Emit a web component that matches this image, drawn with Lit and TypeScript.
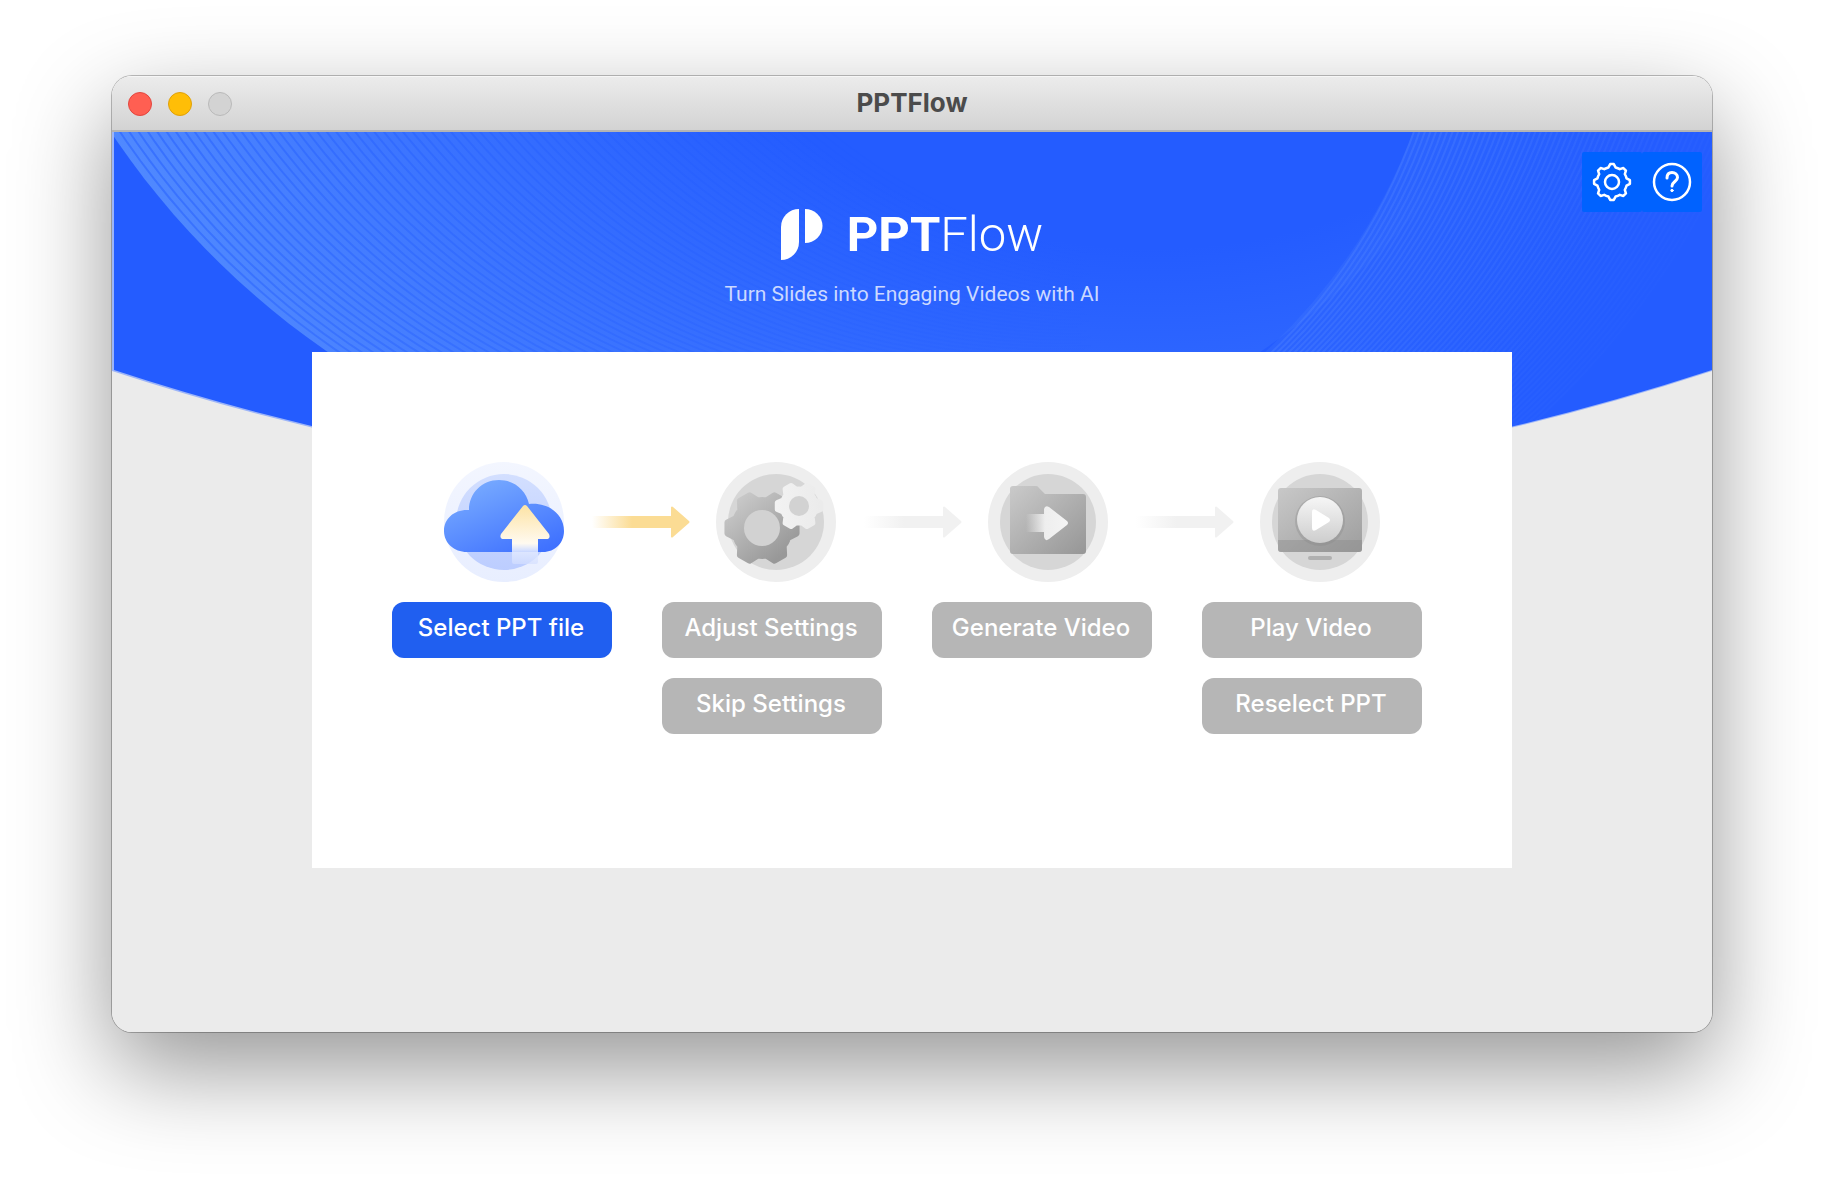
import { LitElement, html, svg, css } from "lit";
import { customElement, property } from "lit/decorators.js";

/** Outline of a toothed wheel centred on (cx, cy). */
function gearPath(cx: number, cy: number, outer: number, inner: number, teeth: number, tip: number, root: number): string {
  const at = (r: number, a: number) => `${(cx + r * Math.cos(a)).toFixed(2)} ${(cy + r * Math.sin(a)).toFixed(2)}`;
  const parts: string[] = [];
  for (let i = 0; i < teeth; i++) {
    const a = Math.PI + (i * 2 * Math.PI) / teeth;
    const next = a + (2 * Math.PI) / teeth;
    parts.push(`${i ? "L" : "M"}${at(inner, a - root)}L${at(outer, a - tip)}L${at(outer, a + tip)}L${at(inner, a + root)}`);
    parts.push(`A${inner} ${inner} 0 0 1 ${at(inner, next - root)}`);
  }
  return parts.join("") + "Z";
}

/** The part of a circle below the banner's top edge and between two x positions, as short chords. */
function bowl(cx: number, cy: number, r: number, minX = -Infinity, maxX = Infinity): string {
  const top = -8;
  const start = Math.PI - Math.asin((top - cy) / r);
  const end = Math.asin((top - cy) / r);
  const count = 72;
  const points: string[] = [];
  for (let i = 0; i <= count; i++) {
    const a = start + ((end - start) * i) / count;
    const x = cx + r * Math.cos(a);
    if (x < minX || x > maxX) continue;
    points.push(`${x.toFixed(1)} ${(cy + r * Math.sin(a)).toFixed(1)}`);
  }
  return "M" + points.join("L");
}

@customElement("banner-art")
class BannerArt extends LitElement {
  static styles = css`
    :host { display: block; }
    .art { display: block; width: 100%; height: 368px; }
  `;

  render() {
    const furrows = Array.from({ length: 74 }, (_, i) => (i + 1) / 58)
      .map((v) => bowl(682 + 321 * v, -457, 822 - 182 * v, -Infinity, 980))
      .join("");
    const rays = Array.from({ length: 60 }, (_, i) => bowl(756 + i * 2, -196 - i * 2, 580 + i * 4, 1050)).join("");
    return html`
      <svg class="art" viewBox="0 0 1600 368" preserveAspectRatio="none" aria-hidden="true">
        <defs>
          <clipPath id="dome"><path d="M2 0H1600V238A2570 2570 0 0 1 2 238Z" /></clipPath>
          <radialGradient id="glow" gradientUnits="userSpaceOnUse" cx="1040" cy="-480" r="1145">
            <stop offset=".52" stop-color="#5089ff" stop-opacity="0" />
            <stop offset="1" stop-color="#5089ff" />
          </radialGradient>
          <linearGradient id="furrow" gradientUnits="userSpaceOnUse" x1="0" y1="0" x2="960" y2="0">
            <stop offset="0" stop-color="#1c56ff" stop-opacity=".45" />
            <stop offset="1" stop-color="#1c56ff" stop-opacity=".05" />
          </linearGradient>
          <linearGradient id="ray" gradientUnits="userSpaceOnUse" x1="1230" y1="60" x2="1520" y2="240">
            <stop offset="0" stop-color="#5b8dff" stop-opacity=".32" />
            <stop offset="1" stop-color="#5b8dff" stop-opacity="0" />
          </linearGradient>
          <linearGradient id="sheen" gradientUnits="userSpaceOnUse" x1="1200" y1="150" x2="1400" y2="260">
            <stop offset="0" stop-color="#4d84ff" stop-opacity=".2" />
            <stop offset="1" stop-color="#4d84ff" stop-opacity="0" />
          </linearGradient>
        </defs>
        <path d="M0 0H1600V239A2570 2570 0 0 1 0 239Z" fill="#9db5f8" />
        <g clip-path="url(#dome)">
          <rect width="1600" height="368" fill="#245cff" />
          <path d=${bowl(682, -457, 822)} fill="url(#glow)" />
          <path d=${furrows} fill="none" stroke="url(#furrow)" stroke-width="2" />
          <path d="M1301 0A580 580 0 0 1 1151 222L1100 280H1600V0Z" fill="url(#sheen)" />
          <path d=${rays} fill="none" stroke="url(#ray)" stroke-width="2" />
        </g>
      </svg>
    `;
  }
}

@customElement("step-icon")
class StepIcon extends LitElement {
  @property() kind = "";

  static styles = css`
    :host { display: block; flex: none; }
    .icon { display: block; width: 120px; height: 120px; }
  `;

  private disc() {
    return svg`<circle cx="60" cy="60" r="60" fill="#eeeeee" /><circle cx="60" cy="60" r="48" fill="#d6d6d6" />`;
  }

  private upload() {
    return svg`
      <defs>
        <linearGradient id="ring" x1="0" y1="0" x2="0" y2="1"><stop stop-color="#f3f6ff" /><stop offset="1" stop-color="#e8eeff" /></linearGradient>
        <linearGradient id="core" x1="0" y1="0" x2="0" y2="1"><stop stop-color="#d3dfff" /><stop offset="1" stop-color="#bccdff" /></linearGradient>
        <linearGradient id="cloud" x1=".1" y1="0" x2=".8" y2="1"><stop stop-color="#7db0ff" /><stop offset="1" stop-color="#3f71ff" /></linearGradient>
        <linearGradient id="up" x1="0" y1="0" x2="0" y2="1"><stop stop-color="#fde3a4" /><stop offset=".65" stop-color="#fffaf0" /><stop offset=".78" stop-color="#ffffff" stop-opacity=".75" /><stop offset=".8" stop-color="#e4ebff" stop-opacity=".8" /><stop offset="1" stop-color="#d4dfff" stop-opacity=".7" /></linearGradient>
      </defs>
      <circle cx="60" cy="60" r="60" fill="url(#ring)" />
      <circle cx="60" cy="60" r="48" fill="url(#core)" />
      <path d="M23 90C10 90 0 81 0 69C0 56 11 47 25 48C25 31 38 18 55 18C70 18 82 28 85 42C104 40 120 52 120 69C120 81 111 90 99 90Z" fill="url(#cloud)" />
      <path d="M79 44Q81 42 83 44L105 72Q107 77 102 77H94V100Q94 102 92 102H70Q68 102 68 100V77H60Q55 77 57 72Z" fill="url(#up)" />
    `;
  }

  private gears() {
    return svg`
      <defs>
        <linearGradient id="big" x1=".1" y1=".1" x2=".8" y2=".9"><stop stop-color="#c8c8c8" /><stop offset="1" stop-color="#989898" /></linearGradient>
        <linearGradient id="small" x1="0" y1="0" x2="1" y2="0"><stop stop-color="#f2f2f2" /><stop offset="1" stop-color="#ebebeb" /></linearGradient>
      </defs>
      ${this.disc()}
      <path d=${gearPath(46, 66, 35, 28, 6, 0.16, 0.36)} fill="url(#big)" stroke="url(#big)" stroke-width="6" stroke-linejoin="round" />
      <circle cx="46" cy="66" r="18" fill="#d2d2d2" />
      <path d=${gearPath(83, 44, 22, 17, 6, 0.16, 0.36)} fill="url(#small)" stroke="url(#small)" stroke-width="5" stroke-linejoin="round" />
      <circle cx="83" cy="44" r="10" fill="#d2d2d2" />
    `;
  }

  private folder() {
    return svg`
      <defs>
        <linearGradient id="body" x1="0" y1="0" x2="1" y2="1"><stop stop-color="#cacaca" /><stop offset="1" stop-color="#969696" /></linearGradient>
        <linearGradient id="go" x1="0" y1="0" x2="1" y2="0"><stop stop-color="#eeeeee" stop-opacity="0" /><stop offset=".45" stop-color="#eeeeee" /><stop offset="1" stop-color="#f4f4f4" /></linearGradient>
      </defs>
      ${this.disc()}
      <path d="M22 27Q22 24 25 24H48Q50 24 51 26L57 32H95Q98 32 98 35V89Q98 92 95 92H25Q22 92 22 89Z" fill="url(#body)" />
      <path d="M38 52H56V47Q57 43 61 45L79 59Q81 61 79 63L61 77Q57 80 56 75V70H38Z" fill="url(#go)" />
    `;
  }

  private screen() {
    return svg`
      <defs>
        <linearGradient id="panel" x1="0" y1="0" x2="1" y2="1"><stop stop-color="#c8c8c8" /><stop offset="1" stop-color="#9e9e9e" /></linearGradient>
        <linearGradient id="knob" x1="0" y1="0" x2="0" y2="1"><stop stop-color="#f6f6f6" /><stop offset="1" stop-color="#cdcdcd" /></linearGradient>
      </defs>
      ${this.disc()}
      <rect x="18" y="26" width="84" height="64" rx="3" fill="url(#panel)" />
      <path d="M18 78H102V87Q102 90 99 90H21Q18 90 18 87Z" fill="#8c8c8c" fill-opacity=".45" />
      <rect x="48" y="94" width="24" height="4" rx="2" fill="#b0b0b0" />
      <circle cx="60" cy="59" r="25" fill="#8a8a8a" fill-opacity=".35" />
      <circle cx="60" cy="58" r="23" fill="url(#knob)" />
      <path d="M52 50Q52 46 56 48L69 56Q71 58 69 60L56 68Q52 70 52 66Z" fill="#ffffff" />
    `;
  }

  render() {
    const art =
      this.kind === "upload" ? this.upload() : this.kind === "gears" ? this.gears() : this.kind === "folder" ? this.folder() : this.screen();
    return html`<svg class="icon" viewBox="0 0 120 120" aria-hidden="true">${art}</svg>`;
  }
}

@customElement("step-arrow")
class StepArrow extends LitElement {
  @property({ type: Boolean }) active = false;

  static styles = css`
    :host { display: flex; flex: 1; justify-content: center; }
    .arrow { width: 100px; height: 32px; }
  `;

  render() {
    const tone = this.active ? "#fbdc94" : "#f1f1f1";
    return html`
      <svg class="arrow" viewBox="0 0 100 32" aria-hidden="true">
        <defs>
          <linearGradient id="fade" gradientUnits="userSpaceOnUse" x1="2" y1="0" x2="42" y2="0">
            <stop stop-color=${tone} stop-opacity="0" />
            <stop offset="1" stop-color=${tone} />
          </linearGradient>
        </defs>
        <path d="M0 10H81V1Q82 0 83 1L99 15Q100 16 99 17L83 31Q82 32 81 31V22H0Z" fill="url(#fade)" />
      </svg>
    `;
  }
}

interface Action {
  label: string;
  primary?: boolean;
}

const COLUMNS: { icon: string; actions: Action[] }[] = [
  { icon: "upload", actions: [{ label: "Select PPT file", primary: true }] },
  { icon: "gears", actions: [{ label: "Adjust Settings" }, { label: "Skip Settings" }] },
  { icon: "folder", actions: [{ label: "Generate Video" }] },
  { icon: "screen", actions: [{ label: "Play Video" }, { label: "Reselect PPT" }] },
];

@customElement("app-root")
class AppRoot extends LitElement {
  static styles = css`
    :host { display: block; font-family: Inter, "Liberation Sans", sans-serif; }
    * { box-sizing: border-box; }
    button { margin: 0; border: 0; padding: 0; font: inherit; }
    .desktop { display: flex; min-height: 100vh; padding: 76px 112px 148px; background: #ffffff; }
    .window {
      flex: 1;
      display: flex;
      flex-direction: column;
      overflow: hidden;
      border-radius: 20px;
      background: #ebebeb;
    }
    .frame {
      flex: 1;
      display: flex;
      border-radius: 20px;
      box-shadow: 0 0 0 1px rgba(0, 0, 0, 0.25), 0 36px 96px rgba(0, 0, 0, 0.42);
    }
    .titlebar {
      display: grid;
      grid-template-columns: 1fr auto 1fr;
      align-items: center;
      height: 56px;
      padding: 0 16px;
      border-bottom: 2px solid #b4b4b4;
      background: linear-gradient(#ececec, #d3d3d3);
      box-shadow: inset 0 1px #f6f6f6;
    }
    .lights { display: flex; gap: 16px; padding-top: 2px; }
    .light { width: 24px; height: 24px; border-radius: 50%; border: 1px solid; }
    .close { background: #ff5f52; border-color: #e2463f; }
    .minimize { background: #ffbe07; border-color: #dfa00a; }
    .zoom { background: #d3d3d3; border-color: #b9b9b9; }
    .title { margin: 0; font-size: 26px; line-height: 32px; font-weight: 700; color: #4b4b4b; }
    .content { position: relative; flex: 1; padding-bottom: 164px; }
    .backdrop { position: absolute; top: 0; left: 0; right: 0; }
    .hero { position: relative; display: grid; grid-template-columns: 1fr auto 1fr; height: 220px; padding: 20px 10px 0; }
    .brand { grid-column: 2; display: flex; flex-direction: column; align-items: center; padding-top: 54px; color: #ffffff; }
    .logo { display: flex; align-items: center; gap: 24px; height: 58px; }
    .mark { width: 42px; height: 52px; }
    .name { margin: 0; font-family: Roboto, sans-serif; font-size: 49px; line-height: 58px; font-weight: 300; }
    .strong { font-weight: 700; }
    .tagline { margin: 16px 0 0; font-family: Roboto, sans-serif; font-size: 21px; line-height: 28px; color: #ccd9ff; }
    .tools { display: flex; justify-content: flex-end; align-items: flex-start; }
    .tool { width: 60px; height: 60px; border-radius: 2px; background: #0062ff; display: grid; place-items: center; }
    .glyph { width: 44px; height: 44px; }
    .card { position: relative; width: 75%; min-height: 516px; margin: 0 auto; padding-top: 110px; background: #ffffff; }
    .steps { display: flex; align-items: center; padding: 0 132px; }
    .actions { display: grid; grid-template-columns: repeat(4, 1fr); gap: 50px; padding: 20px 90px 0 80px; }
    .column { display: flex; flex-direction: column; gap: 20px; }
    .action {
      height: 56px;
      padding: 0 2px 4px 0;
      border-radius: 12px;
      background: #b6b6b6;
      color: #ffffff;
      font-size: 24px;
      line-height: 30px;
      font-weight: 500;
      white-space: nowrap;
    }
    .primary { background: #205ff0; }
  `;

  render() {
    return html`
      <div class="desktop">
        <div class="frame">
          <main class="window">
            <header class="titlebar">
              <div class="lights">
                <button class="light close" aria-label="Close"></button>
                <button class="light minimize" aria-label="Minimize"></button>
                <button class="light zoom" aria-label="Zoom" disabled></button>
              </div>
              <h1 class="title">PPTFlow</h1>
            </header>
            <div class="content">
              <banner-art class="backdrop"></banner-art>
              <section class="hero">
                <div class="brand">
                  <div class="logo">
                    <svg class="mark" viewBox="0 0 42 52" aria-hidden="true">
                      <path d="M18 0V33A18 18 0 0 1 0 51V18A18 18 0 0 1 18 0Z" fill="#ffffff" />
                      <path d="M24 0A17.500 17 0 0 1 24 34Z" fill="#ffffff" />
                    </svg>
                    <h2 class="name"><span class="strong">PPT</span>Flow</h2>
                  </div>
                  <p class="tagline">Turn Slides into Engaging Videos with AI</p>
                </div>
                <div class="tools">
                  <button class="tool" aria-label="Settings">
                    <svg class="glyph" viewBox="0 0 44 44" fill="none" stroke="#ffffff" stroke-width="2.500" stroke-linejoin="round" aria-hidden="true">
                      <path d=${gearPath(22, 22, 18, 15, 8, 0.1, 0.24)} />
                      <circle cx="22" cy="22" r="7" />
                    </svg>
                  </button>
                  <button class="tool" aria-label="Help">
                    <svg class="glyph" viewBox="0 0 44 44" fill="none" stroke="#ffffff" stroke-width="2.500" stroke-linecap="round" aria-hidden="true">
                      <circle cx="22" cy="22" r="18" />
                      <path d="M17 18C17 14 19 12.500 22 12.500C25 12.500 27.500 14.500 27.500 17.500C27.500 21.500 22 21.500 22 26" stroke-width="3" />
                      <circle cx="22" cy="30.500" r="1.200" fill="#ffffff" stroke-width="1" />
                    </svg>
                  </button>
                </div>
              </section>
              <section class="card">
                <div class="steps">
                  ${COLUMNS.map(
                    (c, i) => html`${i ? html`<step-arrow ?active=${i === 1}></step-arrow>` : null}<step-icon kind=${c.icon}></step-icon>`
                  )}
                </div>
                <div class="actions">
                  ${COLUMNS.map(
                    (c) => html`<div class="column">
                      ${c.actions.map((a) => html`<button class="action ${a.primary ? "primary" : ""}">${a.label}</button>`)}
                    </div>`
                  )}
                </div>
              </section>
            </div>
          </main>
        </div>
      </div>
    `;
  }
}
